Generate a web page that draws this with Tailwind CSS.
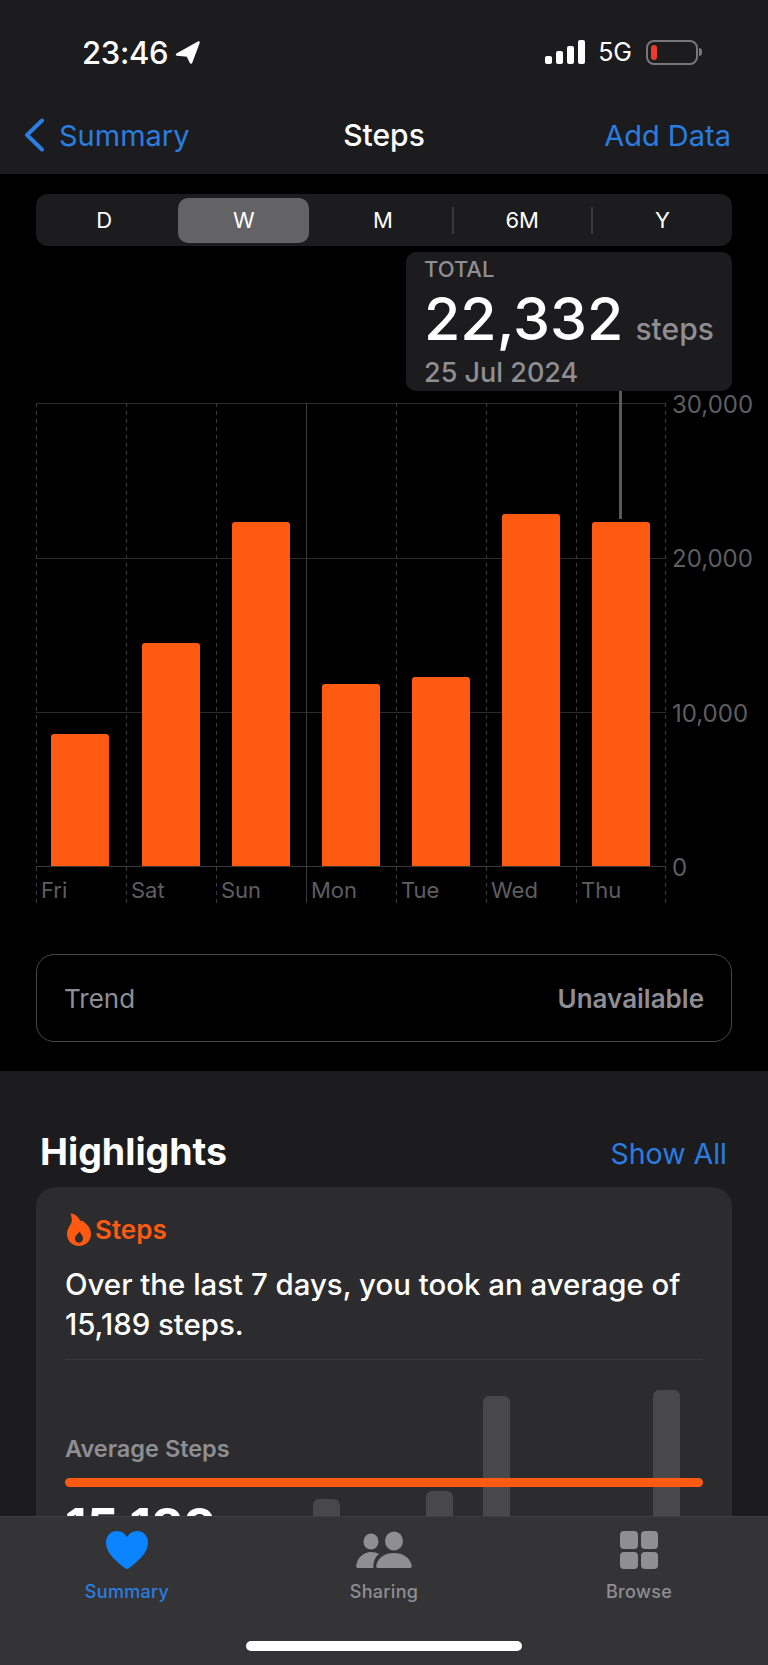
<!DOCTYPE html>
<html lang="en">
<head>
    <meta charset="UTF-8">
    <meta name="viewport" content="width=device-width, initial-scale=1.0">
    <title>Steps</title>
    <script src="https://cdn.jsdelivr.net/npm/@tailwindcss/browser@4"></script>
</head>
<body class="bg-black text-white [font-family:Inter,sans-serif]">
    <div class="relative w-[768px] h-[1665px] overflow-hidden bg-black">
        <!-- Status bar + nav -->
        <header class="h-[174px] bg-[#1c1c1e]">
            <div class="h-[104px] flex items-center justify-between pl-[82px] pr-[66px]">
                <div class="flex items-center gap-[7px]">
                    <span class="text-[31px] font-medium tracking-[-0.3px] leading-none">23:46</span>
                    <svg width="26" height="25" viewBox="0 0 26 25"><path d="M23.500 2.500 L2 14.500 L12.500 15.500 L16 22.500 Z" fill="#fff" stroke="#fff" stroke-width="2.5" stroke-linejoin="round"/></svg>
                </div>
                <div class="flex items-center">
                    <svg width="40" height="25" viewBox="0 0 40 25" fill="#fff">
                        <rect x="0" y="16" width="7" height="8" rx="2"/>
                        <rect x="11" y="11" width="7" height="13" rx="2"/>
                        <rect x="22" y="6" width="7" height="18" rx="2"/>
                        <rect x="33" y="0" width="7" height="24" rx="2"/>
                    </svg>
                    <span class="ml-[13px] text-[25px] leading-none">5G</span>
                    <div class="ml-[14px] flex items-center">
                        <div class="w-[52px] h-[25px] rounded-[8px] border-2 border-[#77777a] p-[3px]">
                            <div class="w-[6px] h-full rounded-[3px] bg-[#f0392d]"></div>
                        </div>
                        <div class="ml-[1px] w-[3px] h-[8px] rounded-r-[3px] bg-[#77777a]"></div>
                    </div>
                </div>
            </div>
            <div class="relative h-[62px] flex items-center justify-between pl-[23px] pr-[37px] text-[29px] leading-none text-[#2a7de1]">
                <div class="flex items-center gap-[14px]">
                    <svg width="22" height="34" viewBox="0 0 22 34" fill="none"><path d="M19 2.5 L4 17 L19 31.5" stroke="#2a7de1" stroke-width="4" stroke-linecap="round" stroke-linejoin="round"/></svg>
                    <span>Summary</span>
                </div>
                <span class="absolute left-0 right-0 text-center text-[30px] text-white font-medium">Steps</span>
                <span>Add Data</span>
            </div>
        </header>

        <!-- Range picker -->
        <div class="mt-[20px] mx-[36px] h-[52px] rounded-[12px] bg-[#1c1c1e] grid grid-cols-5 items-center text-[22px] leading-none">
            <div class="pr-[3px] text-center">D</div>
            <div class="h-[45px] ml-[3px] mr-[5px] rounded-[10px] bg-[#636366] flex items-center justify-center">W</div>
            <div class="h-[27px] flex items-center justify-center border-r-2 border-[#3a3a3c]">M</div>
            <div class="h-[27px] flex items-center justify-center border-r-2 border-[#3a3a3c]">6M</div>
            <div class="text-center">Y</div>
        </div>

        <!-- Chart -->
        <div class="relative mt-[157px] ml-[36px] w-[630px] h-[500px]">
            <svg class="absolute left-0 top-0" width="630" height="500" viewBox="0 0 630 500" fill="none" stroke-width="1">
                <path d="M0 0.500H630M0 155.500H630M0 309.500H630" stroke="#2c2c2e"/>
                <path d="M0 463.500H630" stroke="#3a3a3c"/>
                <path d="M0.500 0V500M90.500 0V500M180.500 0V500M360.500 0V500M450.500 0V500M540.500 0V500M629.500 0V500" stroke="#3a3a3c" stroke-dasharray="4 4"/>
                <path d="M270.500 0V500" stroke="#3a3a3c"/>
            </svg>

            <!-- Bars -->
            <div class="relative grid grid-cols-7 h-[463px] items-end">
                <div class="ml-[15px] w-[58px] h-[132px] rounded-t-[3px] bg-[#ff5a12]"></div>
                <div class="ml-[16px] w-[58px] h-[223px] rounded-t-[3px] bg-[#ff5a12]"></div>
                <div class="ml-[16px] w-[58px] h-[344px] rounded-t-[3px] bg-[#ff5a12]"></div>
                <div class="ml-[16px] w-[58px] h-[182px] rounded-t-[3px] bg-[#ff5a12]"></div>
                <div class="ml-[16px] w-[58px] h-[189px] rounded-t-[3px] bg-[#ff5a12]"></div>
                <div class="ml-[16px] w-[58px] h-[352px] rounded-t-[3px] bg-[#ff5a12]"></div>
                <div class="ml-[16px] w-[58px] h-[344px] rounded-t-[3px] bg-[#ff5a12]"></div>
            </div>
            <div class="relative grid grid-cols-7 h-[37px] pt-[10px] items-center text-[22px] leading-none text-[#5e5e60]">
                <span class="pl-[5px]">Fri</span>
                <span class="pl-[5px]">Sat</span>
                <span class="pl-[5px]">Sun</span>
                <span class="pl-[5px]">Mon</span>
                <span class="pl-[5px]">Tue</span>
                <span class="pl-[5px]">Wed</span>
                <span class="pl-[5px]">Thu</span>
            </div>

            <!-- Y axis -->
            <div class="absolute left-[636px] top-[2px] h-[463px] flex flex-col justify-between text-[24px] text-[#5e5e60]">
                <div class="h-0 flex items-center">30,000</div>
                <div class="h-0 flex items-center">20,000</div>
                <div class="h-0 flex items-center">10,000</div>
                <div class="h-0 flex items-center">0</div>
            </div>

            <!-- Selection tooltip -->
            <div class="absolute left-[583px] top-[-12px] w-[3px] h-[128px] bg-[#58585a]"></div>
            <div class="absolute left-[370px] top-[-151px] w-[326px] h-[139px] rounded-[10px] bg-[#1c1c1e] pl-[18px] pt-[5px]">
                <div class="text-[22px] leading-[24px] font-medium text-[#8e8e93]">TOTAL</div>
                <div class="flex items-baseline mt-[5px] h-[66px]">
                    <span class="text-[59px] leading-[66px] font-medium">22,332</span>
                    <span class="ml-[12px] text-[30px] font-medium text-[#8e8e93]">steps</span>
                </div>
                <div class="mt-[6px] text-[27px] leading-[30px] font-medium text-[#8e8e93]">25 Jul 2024</div>
            </div>
        </div>

        <!-- Trend -->
        <div class="mt-[51px] mx-[36px] h-[88px] rounded-[18px] border-[1.5px] border-[#48484a] flex items-center justify-between px-[27px] pt-[1px] text-[26px] text-[#8e8e93]">
            <span>Trend</span>
            <span class="font-semibold">Unavailable</span>
        </div>

        <!-- Highlights -->
        <section class="mt-[29px] h-[600px] bg-[#1c1c1e] px-[36px]">
            <div class="h-[116px] flex items-end justify-between pb-[13px] pl-[4px] pr-[5px]">
                <h2 class="text-[37.500px] leading-[44px] font-bold">Highlights</h2>
                <span class="text-[28.500px] leading-[40px] text-[#2a7de1]">Show All</span>
            </div>
            <div class="relative h-[420px] rounded-[20px] bg-[#2c2c2e] px-[29px] overflow-hidden">
                <!-- Faded mini bars behind the average line -->
                <div class="absolute left-[277px] top-[312px] w-[27px] h-[60px] rounded-t-[6px] bg-[#48484a]"></div>
                <div class="absolute left-[390px] top-[304px] w-[27px] h-[60px] rounded-t-[6px] bg-[#48484a]"></div>
                <div class="absolute left-[447px] top-[209px] w-[27px] h-[160px] rounded-t-[6px] bg-[#48484a]"></div>
                <div class="absolute left-[617px] top-[203px] w-[27px] h-[160px] rounded-t-[6px] bg-[#48484a]"></div>

                <div class="relative">
                    <div class="pt-[26px] flex items-center gap-[4px] text-[#ff5a12]">
                        <svg class="ml-[2px]" width="24" height="33" viewBox="0 0 24 33" fill="#ff5a12">
                            <path fill-rule="evenodd" d="M3.500 0.500 C9 1 11 4 13.500 8 C15 7.500 16 8 17 9 C21 12 24 16 24 21 C24 28 18.500 33 12 33 C5.500 33 0 28 0 21 C0 16 3 13 4.500 9.500 C5.300 6.500 4.500 3.500 3.500 0.500 Z M12.500 18.500 C11 21 8 22.500 8 25.500 C8 28 9.800 29.800 12 29.800 C14.200 29.800 16 28 16 25.500 C16 22.500 13.800 21 12.500 18.500 Z"/>
                        </svg>
                        <span class="text-[26px] leading-[30px] font-semibold">Steps</span>
                    </div>
                    <p class="mt-[19px] text-[29.400px] leading-[40px] font-medium">Over the last 7 days, you took an average of 15,189 steps.</p>
                    <div class="mt-[14px] h-px bg-[#3a3a3c]"></div>
                    <div class="mt-[75px] text-[23.500px] leading-[28px] font-semibold text-[#8e8e93]">Average Steps</div>
                    <div class="mt-[15px] h-[9px] rounded-full bg-[#ff5a12]"></div>
                    <div class="mt-[13px] text-[50px] leading-[52px] font-bold">15,189</div>
                </div>
            </div>
        </section>

        <!-- Tab bar -->
        <nav class="absolute left-0 right-0 bottom-0 h-[149px] bg-[#343436] border-t border-[#3f3f41]">
            <div class="flex justify-between pt-[14px] pl-[86px] pr-[97px] text-[18px] leading-none font-medium tracking-[0.3px]">
                <div class="w-[82px] flex flex-col items-center text-[#2a7de1]">
                    <svg width="42" height="38" viewBox="0 0 42 38" fill="#0a84ff"><path d="M21 38 C20 38 19 37.300 17.500 36 C8 28.500 0 21 0 11.500 C0 4.800 4.800 0 11 0 C15 0 18.800 2 21 6 C23.200 2 27 0 31 0 C37.200 0 42 4.800 42 11.500 C42 21 34 28.500 24.500 36 C23 37.300 22 38 21 38 Z"/></svg>
                    <span class="mt-[14px]">Summary</span>
                </div>
                <div class="w-[67px] mr-[7px] flex flex-col items-center text-[#8e8e93]">
                    <svg width="56" height="38" viewBox="0 0 56 38" fill="#8e8e93">
                        <ellipse cx="15" cy="10.500" rx="7.500" ry="8"/>
                        <ellipse cx="38" cy="10" rx="9" ry="9.500"/>
                        <path d="M2 37 C0 37 0 35 0.500 33 C2 26 8 21 15 21 C18 21 21 21.800 23 23 C19 26 17 31 17.500 37 Z"/>
                        <path d="M22 37 C20 37 20 35 20.500 33.500 C22.500 26.500 29 22 38 22 C47 22 53.500 26.500 55.500 33.500 C56 35 56 37 54 37 Z"/>
                    </svg>
                    <span class="mt-[14px]">Sharing</span>
                </div>
                <div class="w-[64px] flex flex-col items-center text-[#8e8e93]">
                    <div class="w-[38px] h-[38px] grid grid-cols-2 grid-rows-2 gap-[3px]">
                        <div class="rounded-[4px] bg-[#8e8e93]"></div>
                        <div class="rounded-[4px] bg-[#8e8e93]"></div>
                        <div class="rounded-[4px] bg-[#8e8e93]"></div>
                        <div class="rounded-[4px] bg-[#8e8e93]"></div>
                    </div>
                    <span class="mt-[14px]">Browse</span>
                </div>
            </div>
            <div class="absolute left-[246px] bottom-[14px] w-[276px] h-[10px] rounded-full bg-white"></div>
        </nav>
    </div>
</body>
</html>
